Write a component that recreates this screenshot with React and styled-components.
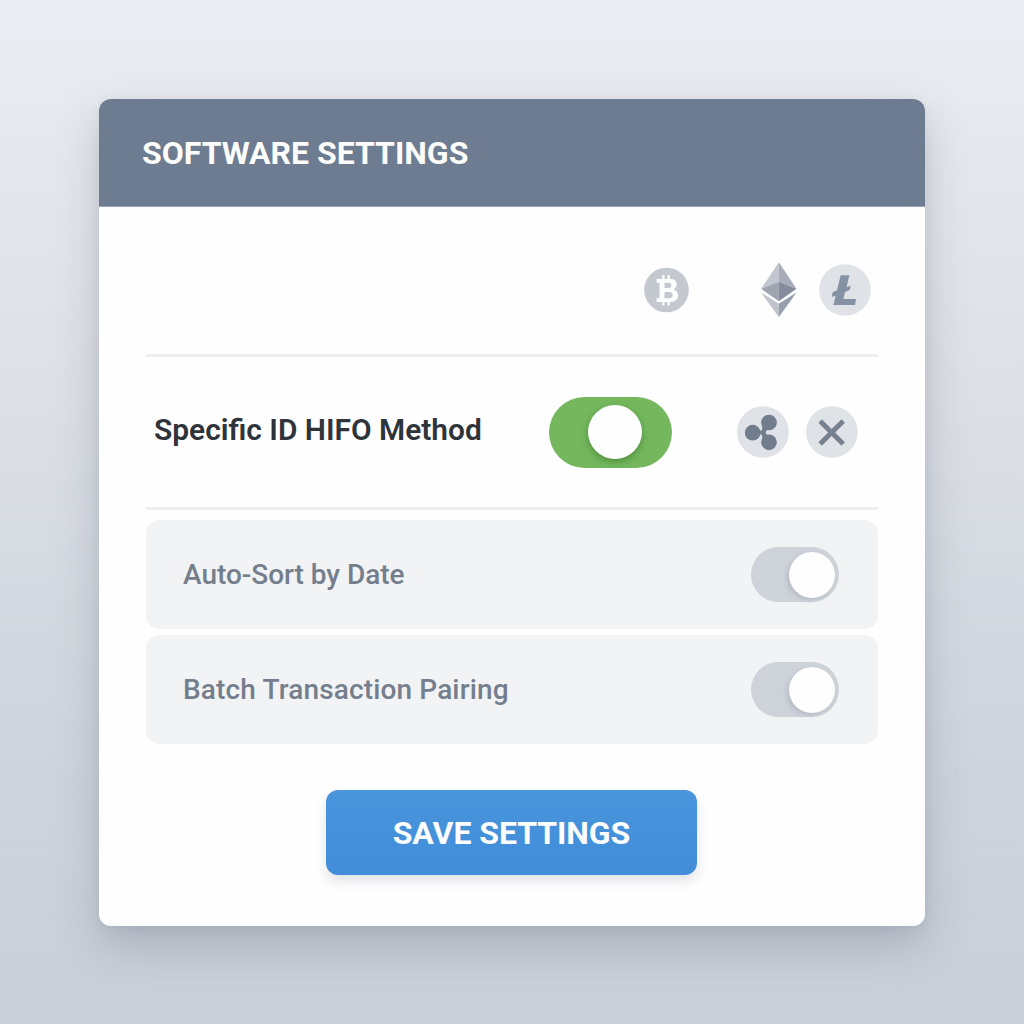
import { createGlobalStyle, styled } from "styled-components"

const GlobalStyle = createGlobalStyle`
  * {
    box-sizing: border-box;
  }

  body {
    margin: 0;
    font-family: Roboto, "Liberation Sans", sans-serif;
  }
`

const Page = styled.main`
  width: 1024px;
  height: 1024px;
  padding: 99px;
  background: linear-gradient(#eaedf1, #dcdfe5 40%, #ced4dd 75%, #c8cfd8);
`

const Card = styled.section`
  display: flex;
  flex-direction: column;
  width: 826px;
  height: 827px;
  border-radius: 12px;
  overflow: hidden;
  background: #fefefe;
  box-shadow: 0 20px 44px rgba(80, 88, 104, 0.27), 0 3px 10px rgba(80, 88, 104, 0.08);
`

const Header = styled.header`
  display: flex;
  align-items: center;
  height: 108px;
  padding: 1px 43px 0;
  background: #6d7c91;
  border-bottom: 1px solid #9aa5b3;
`

const Title = styled.h1`
  margin: 0;
  font-size: 32px;
  font-weight: 700;
  line-height: 1;
  color: #fcfcfa;
  white-space: nowrap;
`

const Body = styled.div`
  display: flex;
  flex-direction: column;
  padding: 0 47px;
`

const CoinRow = styled.div`
  display: flex;
  align-items: center;
  justify-content: flex-end;
  height: 150px;
  padding: 18px 7px 0 0;
  border-bottom: 3px solid #ebeff1;
`

const MethodRow = styled.div`
  display: flex;
  align-items: center;
  height: 153px;
  padding: 0 20px 0 8px;
  border-bottom: 3px solid #ebeff1;
`

const MethodLabel = styled.span`
  width: 395px;
  padding-bottom: 4px;
  font-size: 29.9px;
  font-weight: 600;
  line-height: 1;
  color: #2f343b;
  white-space: nowrap;
`

const Icon = styled.svg`
  display: block;
  flex: none;
  width: ${(props) => props.$width}px;
  height: ${(props) => props.$height}px;
  margin-left: ${(props) => props.$gap || 0}px;
`

const Toggle = styled.button`
  display: flex;
  align-items: center;
  flex: none;
  width: ${(props) => (props.$large ? 123 : 88)}px;
  height: ${(props) => (props.$large ? 71 : 55)}px;
  padding: 0 0 0 ${(props) => (props.$large ? 39 : 38.5)}px;
  border: 0;
  border-radius: 36px;
  background: ${(props) => (props.$large ? "#74b75d" : "#ced3da")};
`

const Knob = styled.span`
  width: ${(props) => (props.$large ? 54 : 46)}px;
  height: ${(props) => (props.$large ? 54 : 46)}px;
  border-radius: 50%;
  background: #fefefe;
  box-shadow: ${(props) =>
    props.$large ? "0 3px 7px rgba(30, 80, 20, 0.4)" : "-2px 2px 5px rgba(90, 100, 120, 0.22)"};
`

const Options = styled.div`
  display: flex;
  flex-direction: column;
  gap: 6px;
  margin-top: 10px;
`

const Option = styled.div`
  display: flex;
  align-items: center;
  justify-content: space-between;
  height: 109px;
  padding: 0 39.5px 0 37px;
  border-radius: 13px;
  background: #f1f3f5;
`

const OptionLabel = styled.span`
  padding-top: 1px;
  font-size: 28px;
  font-weight: 500;
  line-height: 1;
  letter-spacing: ${(props) => props.$tracking}px;
  color: #757e8c;
  white-space: nowrap;
`

const SaveButton = styled.button`
  width: 371px;
  height: 85px;
  margin: 46px 0 0 180px;
  padding: 0;
  border: 0;
  border-radius: 12px;
  background: linear-gradient(#4895dc, #418dd9);
  box-shadow: 0 6px 12px rgba(60, 80, 110, 0.16);
  font-family: inherit;
  font-size: 32px;
  font-weight: 700;
  line-height: 1;
  letter-spacing: -0.05px;
  color: #fcfdfe;
  white-space: nowrap;
`

function BitcoinIcon() {
  return (
    <Icon $width={45} $height={47} viewBox="41 50 136 139">
      <circle cx="109" cy="121" r="67.5" fill="#c4c9d0" />
      <path
        fill="#fdfefe"
        fillRule="evenodd"
        d="M79 88H122C134 88 140 96 140 104C140 112 136 118 130 120C139 122 144 129 144 137C144 149 135 157 122 157H79V146H85Q88 146 88 143V102Q88 99 85 99H79ZM103 99V115H115C127 115 127 99 115 99ZM103 127V146H118C131 146 131 127 118 127Z"
      />
      <path fill="#fdfefe" d="M96 76H103V90H96ZM112 76H119V90H112ZM96 155H103V168H96ZM112 155H119V168H112Z" />
    </Icon>
  )
}

function EthereumIcon() {
  return (
    <Icon $width={36} $height={55} $gap={72} viewBox="393.5 35.5 108 165">
      <path fill="#c2c6ce" d="M447 36V95L394 116Z" />
      <path fill="#a7acb8" d="M447 36V95L500 116Z" />
      <path fill="#9ea4b0" d="M447 95V153L394 116Z" />
      <path fill="#858d9d" d="M447 95V153L500 116Z" />
      <path fill="#bfc3cc" d="M394 127L447 161V201Z" />
      <path fill="#979eac" d="M500 127L447 161V201Z" />
    </Icon>
  )
}

function LitecoinIcon() {
  return (
    <Icon $width={52} $height={52} $gap={22} viewBox="568 42 156 156">
      <circle cx="646" cy="120" r="77.5" fill="#dfe2e7" />
      <path
        fill="#8592a3"
        d="M633 76H659L651 111L663 107L660 120L646 126L641 147H679L676 165H611L618 137L606 141L609 127L622 121Z"
      />
    </Icon>
  )
}

function RippleIcon() {
  return (
    <Icon $width={52} $height={52} $gap={65} viewBox="51 48 156 156">
      <circle cx="129" cy="126" r="77.5" fill="#dfe2e7" />
      <g fill="#717c8d">
        <circle cx="98" cy="128" r="23.5" />
        <circle cx="147" cy="97.5" r="23.5" />
        <circle cx="147" cy="157" r="23.5" />
        <path d="M117 118Q121 124 125 121Q128 117 126 107L144 119Q137 122 137 127.500Q137 132 144 136L126 148Q128 139 125 134Q121 131 117 138Z" />
      </g>
    </Icon>
  )
}

function CloseIcon() {
  return (
    <Icon $width={52} $height={52} $gap={17} viewBox="257.5 48 156 156">
      <circle cx="335" cy="126" r="77.5" fill="#dfe2e7" />
      <g fill="#76808f" transform="translate(334.5 127.5)">
        <rect x="-49" y="-7.5" width="98" height="15" rx="3" transform="rotate(45)" />
        <rect x="-49" y="-7.5" width="98" height="15" rx="3" transform="rotate(-45)" />
      </g>
    </Icon>
  )
}

const options = [
  { label: "Auto-Sort by Date", tracking: -0.03 },
  { label: "Batch Transaction Pairing", tracking: 0.14 },
]

function App() {
  return (
    <Page>
      <GlobalStyle />
      <Card>
        <Header>
          <Title>SOFTWARE SETTINGS</Title>
        </Header>
        <Body>
          <CoinRow>
            <BitcoinIcon />
            <EthereumIcon />
            <LitecoinIcon />
          </CoinRow>
          <MethodRow>
            <MethodLabel>Specific ID HIFO Method</MethodLabel>
            <Toggle $large aria-label="Specific ID HIFO Method">
              <Knob $large />
            </Toggle>
            <RippleIcon />
            <CloseIcon />
          </MethodRow>
          <Options>
            {options.map(({ label, tracking }) => (
              <Option key={label}>
                <OptionLabel $tracking={tracking}>{label}</OptionLabel>
                <Toggle aria-label={label}>
                  <Knob />
                </Toggle>
              </Option>
            ))}
          </Options>
          <SaveButton>SAVE SETTINGS</SaveButton>
        </Body>
      </Card>
    </Page>
  )
}

export default App
